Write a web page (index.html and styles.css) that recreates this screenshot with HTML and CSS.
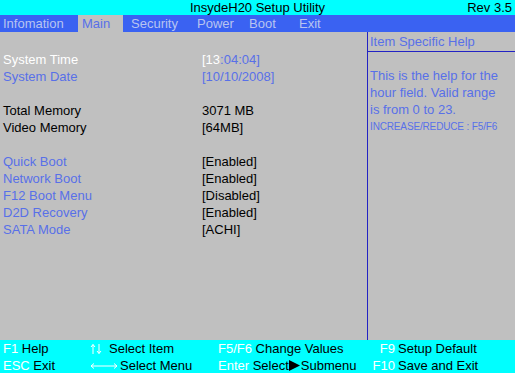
FILE: index.html
```html
<!DOCTYPE html>
<html>
<head>
<meta charset="utf-8">
<title>InsydeH20 Setup Utility</title>
<link rel="stylesheet" href="styles.css">
</head>
<body>
<div class="screen">
  <header class="titlebar">
    <span class="title">InsydeH20 Setup Utility</span>
    <span class="rev">Rev 3.5</span>
  </header>
  <nav class="menubar">
    <span class="tab">Infomation</span>
    <span class="tab active">Main</span>
    <span class="tab">Security</span>
    <span class="tab">Power</span>
    <span class="tab">Boot</span>
    <span class="tab">Exit</span>
  </nav>
  <main class="body">
    <section class="settings">
      <div class="row"><span class="label sel">System Time</span><span class="value"><span class="white">[13</span><span class="blue">:04:04]</span></span></div>
      <div class="row"><span class="label blue">System Date</span><span class="value blue">[10/10/2008]</span></div>
      <div class="row gap"></div>
      <div class="row"><span class="label">Total Memory</span><span class="value">3071 MB</span></div>
      <div class="row"><span class="label">Video Memory</span><span class="value">[64MB]</span></div>
      <div class="row gap"></div>
      <div class="row"><span class="label blue">Quick Boot</span><span class="value">[Enabled]</span></div>
      <div class="row"><span class="label blue">Network Boot</span><span class="value">[Enabled]</span></div>
      <div class="row"><span class="label blue">F12 Boot Menu</span><span class="value">[Disabled]</span></div>
      <div class="row"><span class="label blue">D2D Recovery</span><span class="value">[Enabled]</span></div>
      <div class="row"><span class="label blue">SATA Mode</span><span class="value">[ACHI]</span></div>
    </section>
    <aside class="help">
      <div class="help-head">Item Specific Help</div>
      <div class="help-body">
        <p class="help-text">This is the help for the hour field. Valid range is from 0 to 23.</p>
        <p class="help-small">INCREASE/REDUCE : F5/F6</p>
      </div>
    </aside>
  </main>
  <footer class="footer">
    <div class="fcell c1"><span class="key">F1</span> Help</div>
    <div class="fcell c2"><span class="arrows ud"><svg width="12" height="12" viewBox="0 0 12 12"><path d="M3 11V1.5M1 4L3 1.5L5 4M9 1V10.5M7 8L9 10.5L11 8" fill="none" stroke="#fff" stroke-width="1"/></svg></span><span class="desc-ud">Select Item</span></div>
    <div class="fcell c3"><span class="key">F5/F6</span> Change Values</div>
    <div class="fcell c4"><span class="key k4">F9</span><span>Setup Default</span></div>
    <div class="fcell c1"><span class="key">ESC</span> Exit</div>
    <div class="fcell c2"><span class="arrows lr"><svg width="28" height="8" viewBox="0 0 28 8"><path d="M1 4H27M4 1.5L1 4L4 6.5M24 1.5L27 4L24 6.5" fill="none" stroke="#fff" stroke-width="1"/></svg></span><span class="desc-lr">Select Menu</span></div>
    <div class="fcell c3"><span class="key">Enter</span> Select<svg class="tri" width="11" height="11" viewBox="0 0 11 11"><path d="M0 0L11 5.5L0 11Z" fill="#000"/></svg>Submenu</div>
    <div class="fcell c4"><span class="key k4">F10</span><span>Save and Exit</span></div>
  </footer>
</div>
</body>
</html>
```
FILE: styles.css
```css
* { box-sizing: border-box; margin: 0; padding: 0; }
html, body { width: 515px; height: 373px; overflow: hidden; }
body {
  font-family: "Liberation Sans", Arial, sans-serif;
  font-size: 13px;
  background: #c0c0c0;
  color: #000;
}
.screen {
  width: 515px;
  height: 373px;
  display: grid;
  grid-template-rows: 15px 17px 308px 33px;
}
.titlebar {
  background: #00ffff;
  position: relative;
  line-height: 15px;
  text-align: center;
  color: #000;
}
.rev {
  position: absolute;
  right: 3px;
  top: 0;
}
.menubar {
  background: #3a62f2;
  display: grid;
  grid-template-columns: 78px 45px 70px 52px 50px 1fr;
  line-height: 17px;
  color: #b8c4f0;
}
.tab { padding-left: 4px; white-space: nowrap; }
.tab:first-child { padding-left: 3px; }
.tab:nth-child(3) { padding-left: 8px; }
.tab.active { background: #c0c0c0; color: #5870e8; }
.body {
  display: grid;
  grid-template-columns: 368px 1fr;
  background: #c0c0c0;
}
.settings {
  padding: 19px 0 0 3px;
  border-right: 1px solid #2222c4;
}
.row {
  display: grid;
  grid-template-columns: 199px 1fr;
  height: 17px;
  line-height: 17px;
  white-space: nowrap;
}
.sel, .white { color: #ffffff; }
.blue { color: #5870e8; }
.help {
  color: #5870e8;
}
.help-head {
  height: 20px;
  padding: 1px 0 0 2px;
  line-height: 17px;
  border-bottom: 1px solid #2222c4;
}
.help-body {
  padding: 15px 0 0 2px;
}
.help-text {
  line-height: 17px;
  width: 131px;
}
.help-small {
  font-size: 10px;
  letter-spacing: -0.15px;
  line-height: 17px;
  white-space: nowrap;
}
.footer {
  background: #00ffff;
  display: grid;
  grid-template-columns: 87px 128px 153px 1fr;
  grid-auto-rows: 17px;
  line-height: 17px;
  padding-left: 3px;
  white-space: nowrap;
}
.key { color: #ffffff; }
.fcell { display: flex; align-items: center; white-space: pre; }
.arrows { display: inline-flex; align-items: center; }
.ud { width: 19px; }
.lr { width: 30px; }
.tri { margin: 0 1px 0 0; }
.c4 { display: grid; grid-template-columns: 24px 1fr; column-gap: 3px; }
.k4 { text-align: right; }
```
